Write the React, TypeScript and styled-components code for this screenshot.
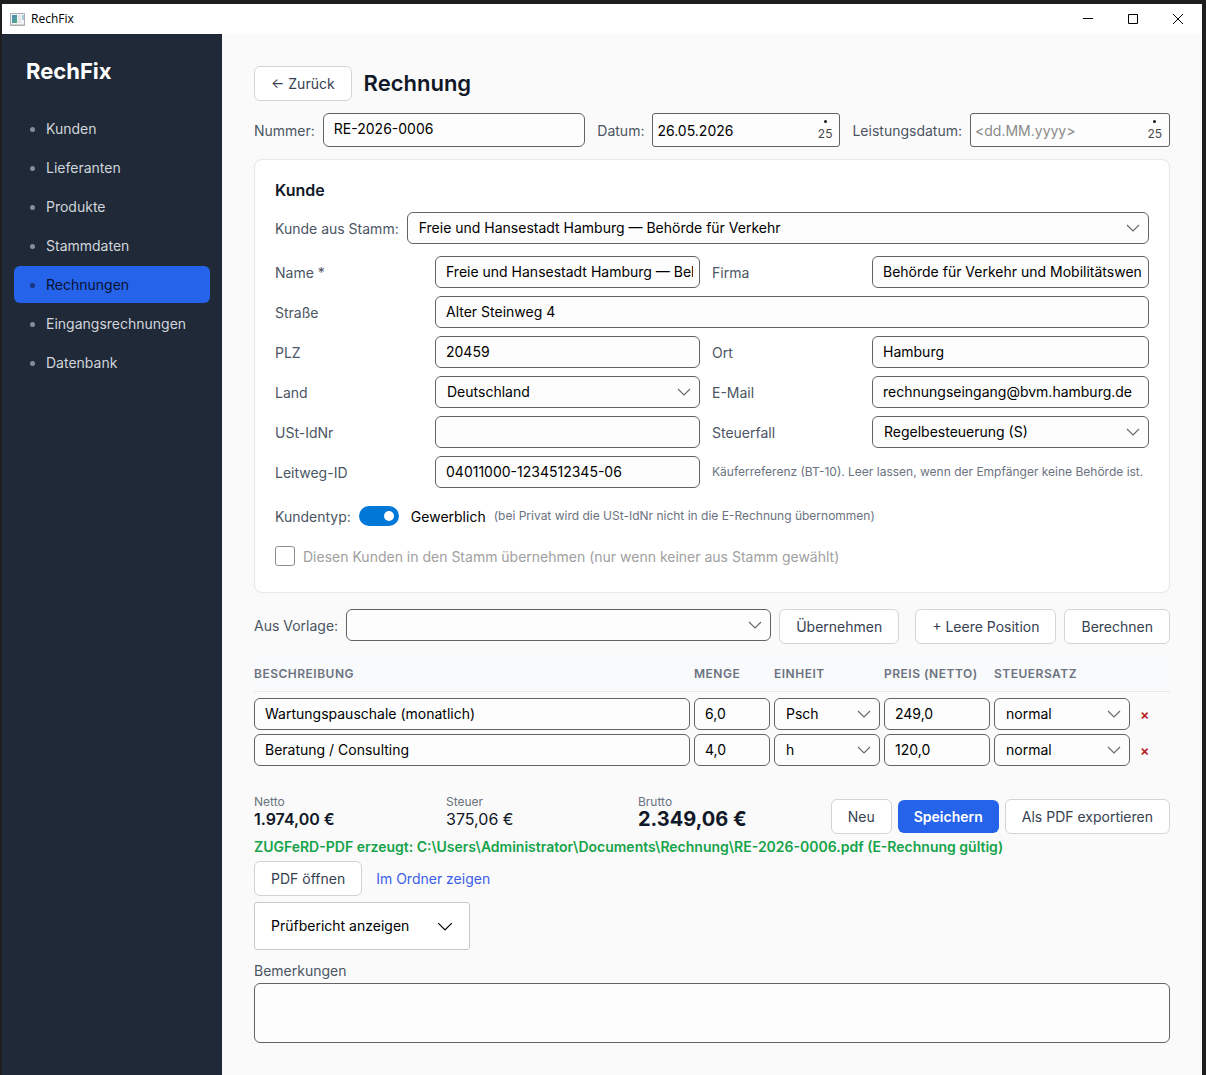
import React, { useState } from "react";
import styled, { createGlobalStyle, css } from "styled-components";

const GlobalStyle = createGlobalStyle`
  *, *::before, *::after { box-sizing: border-box; }
  body {
    margin: 0;
    background: #1e1e1f;
    font-family: Inter, "Liberation Sans", sans-serif;
    font-size: 14px;
    line-height: 18px;
    color: #111827;
  }
  button, input, select, textarea { font: inherit; color: inherit; margin: 0; }
`;

const Window = styled.div`
  display: flex;
  flex-direction: column;
  min-height: 100vh;
  border: solid #1e1e1f;
  border-width: 4px 4px 0 2px;
`;

const TitleBar = styled.header`
  display: flex;
  align-items: center;
  gap: 6px;
  height: 30px;
  padding: 0 2px 0 8px;
  background: #fff;
  color: #000;
  font-family: "Open Sans", "Noto Sans", sans-serif;
  font-size: 12px;
`;

const WindowTitle = styled.span`
  flex: 1;
`;

const CaptionButton = styled.button`
  display: grid;
  place-items: center;
  width: 45px;
  height: 30px;
  padding: 0;
  border: 0;
  background: none;
`;

const Body = styled.div`
  display: flex;
  flex: 1;
`;

const Sidebar = styled.aside`
  width: 220px;
  flex: none;
  padding: 24px 12px;
  background: #1f2937;
`;

const Brand = styled.div`
  padding: 0 12px;
  margin-bottom: 26px;
  color: #fff;
  font-size: 22px;
  line-height: 26px;
  font-weight: 700;
`;

const Nav = styled.nav`
  display: flex;
  flex-direction: column;
  gap: 2px;
`;

const NavLink = styled.a<{ $active?: boolean }>`
  display: flex;
  align-items: center;
  gap: 11px;
  height: 37px;
  padding: 0 16px;
  border-radius: 6px;
  text-decoration: none;
  color: ${(p) => (p.$active ? "#0a1330" : "#d1d5db")};
  background: ${(p) => (p.$active ? "#2563eb" : "transparent")};

  &::before {
    content: "";
    width: 5px;
    height: 5px;
    margin-top: 2px;
    border-radius: 50%;
    background: ${(p) => (p.$active ? "#17377f" : "#868d97")};
  }
`;

const Main = styled.main`
  flex: 1;
  min-width: 0;
  padding: 32px;
  background: #fafafa;
`;

const Row = styled.div<{ $gap?: number; $top?: number; $align?: string; $grow?: boolean }>`
  display: flex;
  align-items: ${(p) => p.$align ?? "center"};
  gap: ${(p) => p.$gap ?? 8}px;
  margin-top: ${(p) => p.$top ?? 0}px;
  ${(p) => p.$grow && "flex: 1; min-width: 0;"}
`;

const Heading = styled.h1`
  margin: 0;
  padding-bottom: 2px;
  font-size: 22px;
  line-height: 26px;
  font-weight: 600;
`;

const Button = styled.button<{ $primary?: boolean }>`
  flex: none;
  height: 35px;
  padding: 0 16px;
  border: 1px solid #d1d5db;
  border-radius: 6px;
  background: #fff;
  color: #374151;
  white-space: nowrap;
  ${(p) =>
    p.$primary &&
    css`
      height: 33px;
      border: 0;
      background: #2563eb;
      color: #fff;
      font-weight: 600;
    `}
`;

const Label = styled.label`
  flex: none;
  padding-top: 2px;
  color: #4b5563;
  white-space: nowrap;
`;

const fieldFrame = css`
  width: 100%;
  min-width: 0;
  height: 32px;
  border: 1px solid #636363;
  border-radius: 6px;
  background: #fdfdfd;
  color: #000;
  outline: none;
`;

const Input = styled.input<{ $tall?: boolean }>`
  ${fieldFrame}
  padding: 0 6px 1px 10px;
  ${(p) => p.$tall && "height: 34px; padding-bottom: 3px;"}
`;

const SelectFrame = styled.div`
  display: grid;
  align-items: center;
  flex: 1;
  min-width: 0;

  > * { grid-area: 1 / 1; }
  > svg { justify-self: end; margin-right: 9px; pointer-events: none; }
`;

const NativeSelect = styled.select`
  ${fieldFrame}
  appearance: none;
  padding: 0 32px 0 11px;
`;

const DateFrame = styled.div<{ $width: number }>`
  display: flex;
  align-items: center;
  flex: none;
  width: ${(p) => p.$width}px;
  height: 34px;
  padding: 0 7px 0 4px;
  border: 1px solid #636363;
  border-radius: 3px;
  background: #fdfdfd;
`;

const DateInput = styled.input`
  flex: 1;
  min-width: 0;
  padding: 2px 0 0;
  border: 0;
  background: none;
  outline: none;
  color: #000;
  &::placeholder { color: #8b8b8b; opacity: 1; }
`;

const CalendarButton = styled.button`
  display: flex;
  flex-direction: column;
  align-items: center;
  gap: 4px;
  padding: 0;
  border: 0;
  background: none;
  color: #4a4a4a;
  font-size: 12px;
  line-height: 14px;

  &::before {
    content: "";
    width: 3px;
    height: 3px;
    border-radius: 50%;
    background: #1a1a1a;
  }
`;

const Card = styled.section`
  margin-top: 12px;
  padding: 20px 20px 26px;
  border: 1px solid #e5e7eb;
  border-radius: 8px;
  background: #fff;
`;

const CardTitle = styled.h2`
  margin: 0 0 12px;
  font-size: 16px;
  line-height: 20px;
  font-weight: 600;
`;

const FormGrid = styled.div`
  display: grid;
  grid-template-columns: 160px minmax(0, 1fr) 160px minmax(0, 1fr);
  align-items: center;
  row-gap: 8px;
  margin-top: 12px;
`;

const Cell = styled.div<{ $wide?: boolean; $inset?: boolean }>`
  display: flex;
  ${(p) => p.$wide && "grid-column: span 3;"}
  ${(p) => p.$inset && "padding-right: 12px;"}
`;

const Hint = styled.span<{ $wide?: boolean }>`
  color: #6b7280;
  font-size: 12px;
  white-space: nowrap;
  ${(p) => p.$wide && "grid-column: span 2;"}
`;

const Switch = styled.input`
  appearance: none;
  display: flex;
  align-items: center;
  justify-content: flex-end;
  flex: none;
  width: 40px;
  height: 20px;
  padding: 0 5px;
  border-radius: 10px;
  background: #0078d7;

  &::before {
    content: "";
    width: 10px;
    height: 10px;
    border-radius: 50%;
    background: #fff;
  }
  &:not(:checked) { justify-content: flex-start; background: #8a8a8a; }
`;

const SwitchText = styled.span`
  padding: 2px 0 0 4px;
  color: #000;
`;

const CheckBox = styled.input`
  appearance: none;
  width: 20px;
  height: 20px;
  border: 1px solid #8f8f8f;
  border-radius: 3px;
  background: #fff;
`;

const MutedLabel = styled(Label)`
  color: #a0a0a0;
`;

const Spacer = styled.div`
  width: 0;
`;

const Table = styled.table`
  width: 100%;
  margin-top: 12px;
  border-collapse: separate;
  border-spacing: 0;
  table-layout: fixed;
`;

const HeadCell = styled.th<{ $width?: number }>`
  width: ${(p) => (p.$width ? `${p.$width}px` : "auto")};
  height: 36px;
  padding: 0;
  border-bottom: 1px solid #e5e7eb;
  background: #f9fafb;
  color: #6b7280;
  font-size: 12px;
  font-weight: 600;
  letter-spacing: 0.5px;
  text-align: left;
  white-space: nowrap;
`;

const BodyCell = styled.td<{ $first?: boolean }>`
  padding: ${(p) => (p.$first ? 6 : 4)}px 4px 0 0;
`;

const DeleteButton = styled.button`
  display: block;
  padding: 2px 6px 0;
  border: 0;
  background: none;
  color: #b91c1c;
  font-size: 14px;
  font-weight: 600;
  line-height: 14px;
`;

const Totals = styled.dl`
  display: grid;
  grid-template-columns: 192px 192px auto;
  flex: 1;
  margin: 0;
  padding-bottom: 5px;
`;

const TotalName = styled.dt`
  color: #6b7280;
  font-size: 12px;
  line-height: 14px;
`;

const TotalValue = styled.dd<{ $size?: number; $weight?: number }>`
  margin: 0;
  font-size: ${(p) => p.$size ?? 16}px;
  font-weight: ${(p) => p.$weight ?? 600};
  line-height: 20px;
`;

const Status = styled.p`
  margin: 4px 0 5px;
  color: #16a34a;
  font-weight: 600;
`;

const TextLink = styled.a`
  padding-left: 6px;
  color: #3b5fe8;
  text-decoration: none;
`;

const Expander = styled.button`
  display: flex;
  align-items: center;
  gap: 28px;
  height: 48px;
  margin-top: 6px;
  padding: 0 16px;
  border: 1px solid #c8c8c8;
  border-radius: 3px;
  background: #fff;
  color: #000;
`;

const NotesLabel = styled.label`
  display: block;
  margin: 12px 0 3px;
  color: #4b5563;
`;

const Notes = styled.textarea`
  ${fieldFrame}
  display: block;
  height: 60px;
  padding: 6px 10px;
  resize: none;
`;

const Chevron = ({ width = 14, color = "#666" }: { width?: number; color?: string }) => (
  <svg width={width} height={width / 2 + 1} viewBox="0 0 14 8" fill="none" stroke={color} strokeWidth="1.1" aria-hidden="true">
    <path d="M1 1l6 6 6-6" />
  </svg>
);

const Select = ({ id, label, options }: { id?: string; label?: string; options: string[] }) => (
  <SelectFrame>
    <NativeSelect id={id} aria-label={label}>
      {options.map((o) => (
        <option key={o}>{o}</option>
      ))}
    </NativeSelect>
    <Chevron />
  </SelectFrame>
);

const AppIcon = () => (
  <svg width="15" height="13" viewBox="0 0 15 13" aria-hidden="true">
    <defs>
      <linearGradient id="pane" x1="0" y1="0" x2="1" y2="1">
        <stop offset="0" stopColor="#4f86bd" />
        <stop offset="1" stopColor="#4fae7c" />
      </linearGradient>
    </defs>
    <rect x="0.5" y="0.5" width="14" height="12" fill="#f4f5f6" stroke="#a9afb3" />
    <rect x="2" y="2" width="5" height="8" fill="url(#pane)" />
    <rect x="8" y="2" width="3" height="8" fill="#e4e6e8" />
    <rect x="12" y="2" width="2" height="5" fill="#a8cdd6" />
    <path d="M1 11.5h13" stroke="#cfd2d4" />
  </svg>
);

const NAV = ["Kunden", "Lieferanten", "Produkte", "Stammdaten", "Rechnungen", "Eingangsrechnungen", "Datenbank"];

const COLUMNS: { title: string; width?: number }[] = [
  { title: "BESCHREIBUNG" },
  { title: "MENGE", width: 80 },
  { title: "EINHEIT", width: 110 },
  { title: "PREIS (NETTO)", width: 110 },
  { title: "STEUERSATZ", width: 140 },
  { title: "", width: 36 },
];

const ITEMS = [
  { text: "Wartungspauschale (monatlich)", amount: "6,0", unit: "Psch", price: "249,0", tax: "normal" },
  { text: "Beratung / Consulting", amount: "4,0", unit: "h", price: "120,0", tax: "normal" },
];

export default function App() {
  const [business, setBusiness] = useState(true);

  return (
    <>
      <GlobalStyle />
      <Window>
        <TitleBar>
          <AppIcon />
          <WindowTitle>RechFix</WindowTitle>
          <Row $gap={0}>
            <CaptionButton aria-label="Minimieren">
              <svg width="10" height="10" stroke="#000"><path d="M0 4.5h10" /></svg>
            </CaptionButton>
            <CaptionButton aria-label="Maximieren">
              <svg width="10" height="10" fill="none" stroke="#000"><path d="M.5 .5h9v9h-9z" /></svg>
            </CaptionButton>
            <CaptionButton aria-label="Schließen">
              <svg width="10" height="10" stroke="#000"><path d="M0 0l10 10M10 0L0 10" /></svg>
            </CaptionButton>
          </Row>
        </TitleBar>
        <Body>
          <Sidebar>
            <Brand>RechFix</Brand>
            <Nav>
              {NAV.map((name) => (
                <NavLink key={name} href="#" $active={name === "Rechnungen"}>
                  {name}
                </NavLink>
              ))}
            </Nav>
          </Sidebar>
          <Main>
            <Row $gap={12}>
              <Button>← Zurück</Button>
              <Heading>Rechnung</Heading>
            </Row>

            <Row $gap={12} $top={12}>
              <Row $grow>
                <Label htmlFor="nummer">Nummer:</Label>
                <Input id="nummer" $tall defaultValue="RE-2026-0006" />
              </Row>
              <Row>
                <Label htmlFor="datum">Datum:</Label>
                <DateFrame $width={188}>
                  <DateInput id="datum" defaultValue="26.05.2026" />
                  <CalendarButton>25</CalendarButton>
                </DateFrame>
              </Row>
              <Row>
                <Label htmlFor="leistung">Leistungsdatum:</Label>
                <DateFrame $width={200}>
                  <DateInput id="leistung" placeholder="<dd.MM.yyyy>" />
                  <CalendarButton>25</CalendarButton>
                </DateFrame>
              </Row>
            </Row>

            <Card>
              <CardTitle>Kunde</CardTitle>
              <Row>
                <Label htmlFor="stamm">Kunde aus Stamm:</Label>
                <Select id="stamm" options={["Freie und Hansestadt Hamburg — Behörde für Verkehr"]} />
              </Row>
              <FormGrid>
                <Label htmlFor="name">Name *</Label>
                <Cell $inset><Input id="name" defaultValue="Freie und Hansestadt Hamburg — Behörde für Verkehr" /></Cell>
                <Label htmlFor="firma">Firma</Label>
                <Cell><Input id="firma" defaultValue="Behörde für Verkehr und Mobilitätswende" /></Cell>
                <Label htmlFor="strasse">Straße</Label>
                <Cell $wide><Input id="strasse" defaultValue="Alter Steinweg 4" /></Cell>
                <Label htmlFor="plz">PLZ</Label>
                <Cell $inset><Input id="plz" defaultValue="20459" /></Cell>
                <Label htmlFor="ort">Ort</Label>
                <Cell><Input id="ort" defaultValue="Hamburg" /></Cell>
                <Label htmlFor="land">Land</Label>
                <Cell $inset><Select id="land" options={["Deutschland"]} /></Cell>
                <Label htmlFor="mail">E-Mail</Label>
                <Cell><Input id="mail" defaultValue="rechnungseingang@bvm.hamburg.de" /></Cell>
                <Label htmlFor="ust">USt-IdNr</Label>
                <Cell $inset><Input id="ust" /></Cell>
                <Label htmlFor="steuerfall">Steuerfall</Label>
                <Cell><Select id="steuerfall" options={["Regelbesteuerung (S)"]} /></Cell>
                <Label htmlFor="leitweg">Leitweg-ID</Label>
                <Cell $inset><Input id="leitweg" defaultValue="04011000-1234512345-06" /></Cell>
                <Hint $wide>Käuferreferenz (BT-10). Leer lassen, wenn der Empfänger keine Behörde ist.</Hint>
              </FormGrid>
              <Row $top={18}>
                <Label htmlFor="kundentyp">Kundentyp:</Label>
                <Switch
                  id="kundentyp"
                  type="checkbox"
                  role="switch"
                  checked={business}
                  onChange={(e) => setBusiness(e.target.checked)}
                />
                <SwitchText>{business ? "Gewerblich" : "Privat"}</SwitchText>
                <Hint>(bei Privat wird die USt-IdNr nicht in die E-Rechnung übernommen)</Hint>
              </Row>
              <Row $top={20}>
                <CheckBox id="uebernehmen" type="checkbox" disabled />
                <MutedLabel htmlFor="uebernehmen">
                  Diesen Kunden in den Stamm übernehmen (nur wenn keiner aus Stamm gewählt)
                </MutedLabel>
              </Row>
            </Card>

            <Row $top={16} $align="flex-start">
              <Row $grow>
                <Label htmlFor="vorlage">Aus Vorlage:</Label>
                <Select id="vorlage" options={[""]} />
              </Row>
              <Button>Übernehmen</Button>
              <Spacer />
              <Button>+ Leere Position</Button>
              <Button>Berechnen</Button>
            </Row>

            <Table>
              <thead>
                <tr>
                  {COLUMNS.map((c) => (
                    <HeadCell key={c.title} $width={c.width}>{c.title}</HeadCell>
                  ))}
                </tr>
              </thead>
              <tbody>
                {ITEMS.map((item, i) => (
                  <tr key={item.text}>
                    <BodyCell $first={i === 0}><Input aria-label="Beschreibung" defaultValue={item.text} /></BodyCell>
                    <BodyCell $first={i === 0}><Input aria-label="Menge" defaultValue={item.amount} /></BodyCell>
                    <BodyCell $first={i === 0}><Select label="Einheit" options={[item.unit]} /></BodyCell>
                    <BodyCell $first={i === 0}><Input aria-label="Preis (netto)" defaultValue={item.price} /></BodyCell>
                    <BodyCell $first={i === 0}><Select label="Steuersatz" options={[item.tax]} /></BodyCell>
                    <BodyCell $first={i === 0}><DeleteButton aria-label="Position löschen">×</DeleteButton></BodyCell>
                  </tr>
                ))}
              </tbody>
            </Table>

            <Row $gap={6} $top={29} $align="flex-end">
              <Totals>
                <div>
                  <TotalName>Netto</TotalName>
                  <TotalValue>1.974,00 €</TotalValue>
                </div>
                <div>
                  <TotalName>Steuer</TotalName>
                  <TotalValue $weight={400}>375,06 €</TotalValue>
                </div>
                <div>
                  <TotalName>Brutto</TotalName>
                  <TotalValue $size={20} $weight={700}>2.349,06 €</TotalValue>
                </div>
              </Totals>
              <Row $gap={6}>
                <Button>Neu</Button>
                <Button $primary>Speichern</Button>
                <Button>Als PDF exportieren</Button>
              </Row>
            </Row>

            <Status>ZUGFeRD-PDF erzeugt: C:\Users\Administrator\Documents\Rechnung\RE-2026-0006.pdf (E-Rechnung gültig)</Status>
            <Row>
              <Button>PDF öffnen</Button>
              <TextLink href="#">Im Ordner zeigen</TextLink>
            </Row>
            <Expander aria-expanded="false">
              Prüfbericht anzeigen
              <Chevron width={16} color="#000" />
            </Expander>

            <NotesLabel htmlFor="bemerkungen">Bemerkungen</NotesLabel>
            <Notes id="bemerkungen" />
          </Main>
        </Body>
      </Window>
    </>
  );
}
